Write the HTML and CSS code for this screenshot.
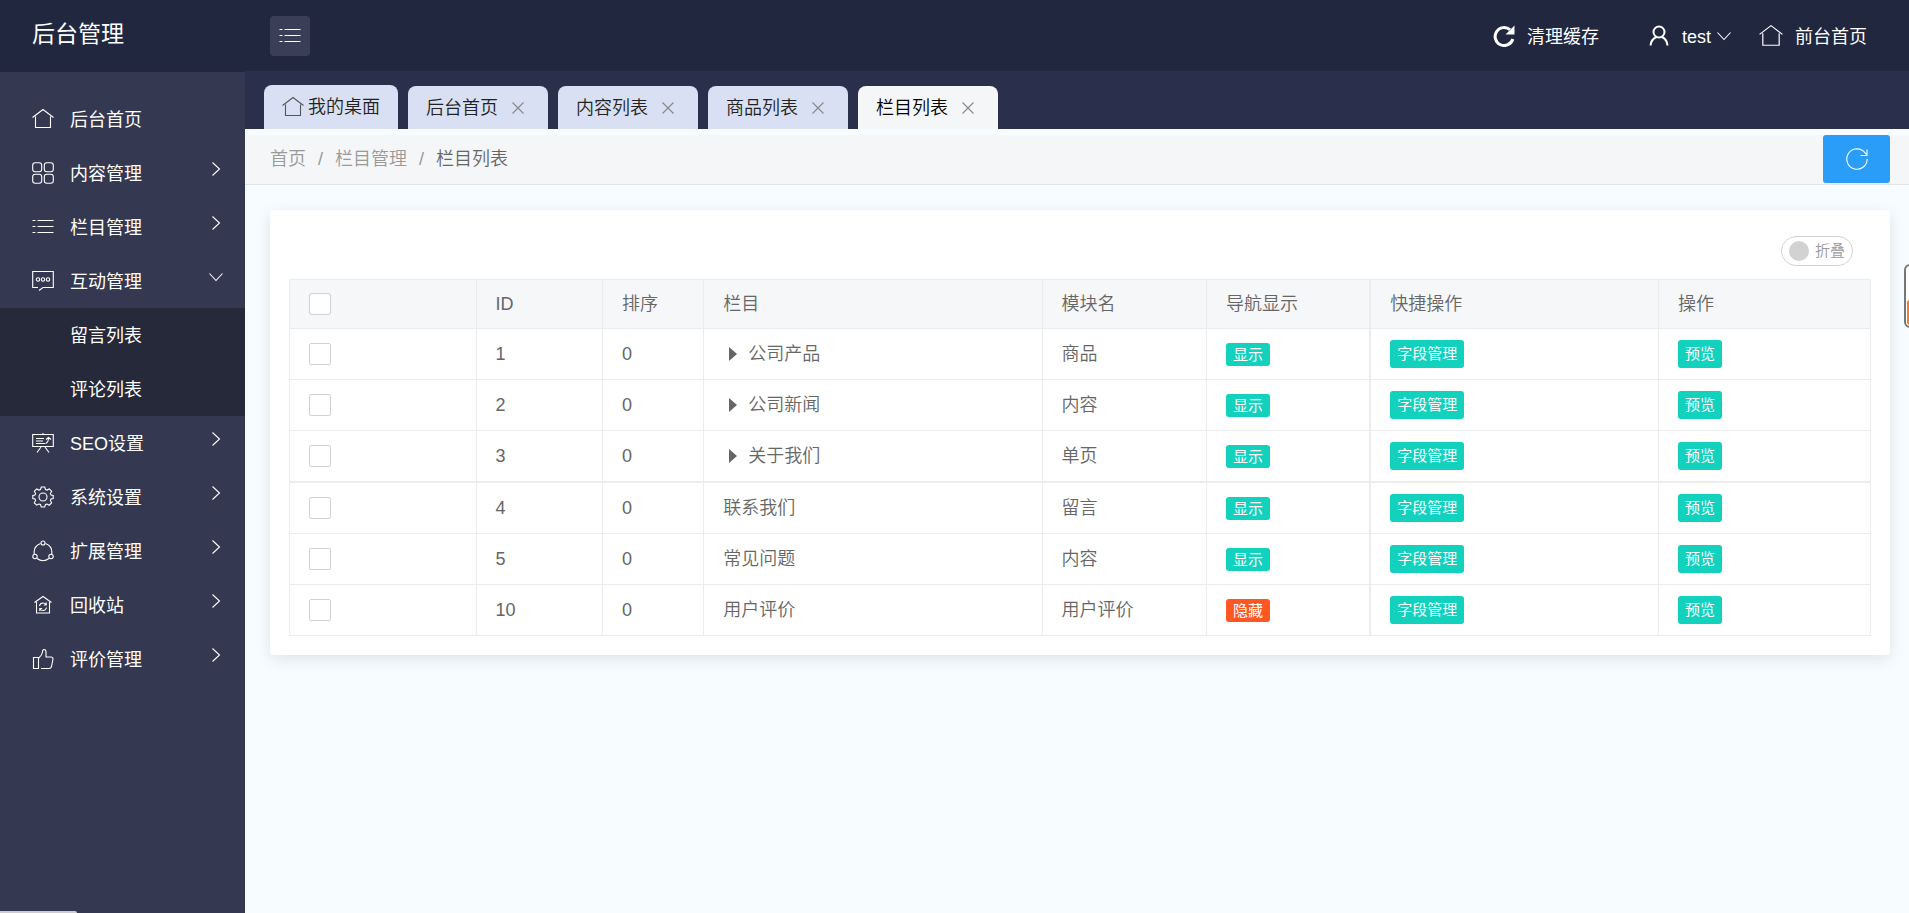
FILE: index.html
```html
<!DOCTYPE html>
<html lang="zh-CN">
<head>
<meta charset="utf-8">
<meta name="viewport" content="width=device-width, initial-scale=1">
<title>后台管理</title>
<link rel="stylesheet" href="styles.css">
</head>
<body>
<svg class="sprite" aria-hidden="true">
  <symbol id="i-home" viewBox="0 0 22 22"><path d="M.5 9.500 11 1.500 21.500 9.500M3.500 8.500V19.500H18.500V8.500"/></symbol>
  <symbol id="i-grid" viewBox="0 0 22 22"><rect x=".7" y=".7" width="9" height="9" rx="2.500"/><rect x="12.300" y=".7" width="9" height="9" rx="2.500"/><rect x=".7" y="12.300" width="9" height="9" rx="2.500"/><rect x="12.300" y="12.300" width="9" height="9" rx="2.500"/></symbol>
  <symbol id="i-list" viewBox="0 0 22 22"><path d="M.5 4.500H3.500M5.500 4.500H21.500M.5 10.500H3.500M5.500 10.500H21.500M.5 16.500H3.500M5.500 16.500H21.500"/></symbol>
  <symbol id="i-chat" viewBox="0 0 22 22"><path d="M6 17.500H.7V1.500H21.300V17.500H11L7 20.500"/><circle cx="6" cy="9.500" r="1.700"/><circle cx="11" cy="9.500" r="1.700"/><circle cx="16" cy="9.500" r="1.700"/></symbol>
  <symbol id="i-board" viewBox="0 0 22 22"><path d="M.7 2.500H21.300V14.500H.7ZM11 1V2.500M4 6.500H12M4 9H11M4 11.500H13M13.500 11.500Q16.500 10.500 16.500 5.500M14 7.500 16.500 5.500 19 7.500M9 15 5 20.500M13 15 17 20.500"/></symbol>
  <symbol id="i-gear" viewBox="0 0 22 22"><path d="M8.500 3.500 9.300 1H12.700L13.500 3.500 15 4.100 17.300 2.900 19.700 5.300 18.400 7.600 19 9 21.200 9.500V12.500L19 13 18.400 14.500 19.600 16.800 17.200 19.200 15 18 13.500 18.500 12.700 21H9.300L8.500 18.500 7 18 4.700 19.200 2.300 16.800 3.600 14.500 3 13 .8 12.500V9.500L3 9 3.600 7.600 2.300 5.300 4.700 2.900 7 4.100Z"/><circle cx="11" cy="11" r="4"/></symbol>
  <symbol id="i-share" viewBox="0 0 22 22"><circle cx="11" cy="3" r="2"/><circle cx="3" cy="16.500" r="2.200"/><circle cx="19" cy="16.500" r="2.200"/><path d="M8.500 3.500C3.500 5 1.500 9.500 2.300 14M13.500 3.500C18.500 5 20.500 9.500 19.700 14M5 18.500Q11 23 17 18.500"/></symbol>
  <symbol id="i-recycle" viewBox="0 0 22 22"><path d="M2.500 8.500 11 2.500 19.500 8.500M4.500 8V19H17.500V8M7.500 12Q8 9 11 9 13 9 14 10.500M14.200 8.500V11H11.800M14.500 13.500Q14 16.500 11 16.500 9 16.500 8 15M7.800 17V14.500H10.200"/></symbol>
  <symbol id="i-thumb" viewBox="0 0 22 22"><path d="M1.500 9.500H6.500V20.500H1.500ZM9 20.500H17Q19 20.500 19.500 18.500L21 11Q21 9 19 9H14V4Q14 1.500 12 1.500 10.500 1.500 10.500 4 10 7.500 6.800 10"/></symbol>
  <symbol id="i-right" viewBox="0 0 16 16"><path d="M4.500 1.500 11.500 8 4.500 14.500"/></symbol>
  <symbol id="i-down" viewBox="0 0 16 16"><path d="M1.500 4.500 8 11.500 14.500 4.500"/></symbol>
  <symbol id="i-close" viewBox="0 0 16 16"><path d="M2.500 2.500 13.500 13.500M13.500 2.500 2.500 13.500"/></symbol>
  <symbol id="i-user" viewBox="0 0 22 22"><circle cx="11" cy="7" r="5.500"/><path d="M2.500 20.500Q3 14.500 8.500 12M14 12Q19 14.500 19.500 20.500"/></symbol>
  <symbol id="i-reload" viewBox="0 0 22 22"><path d="M21.200 11A10.200 10.200 0 1 1 17.500 3.200L20.500 6.500M21 1.500V7.500H14.500"/></symbol>
  <symbol id="i-reload-bold" viewBox="0 0 22 22"><path d="M19.800 14A9 9 0 1 1 17 4.700" stroke-width="3"/><path d="M21.500 .5V9.500H12.500Z" fill="currentColor" stroke="none"/></symbol>
</svg>

<div class="app">
  <aside class="sidebar">
    <h1 class="brand">后台管理</h1>
    <nav class="menu" aria-label="主菜单">
      <a class="menu-item" href="#"><svg class="icon"><use href="#i-home"/></svg><span>后台首页</span></a>
      <a class="menu-item" href="#"><svg class="icon"><use href="#i-grid"/></svg><span>内容管理</span><svg class="arrow"><use href="#i-right"/></svg></a>
      <a class="menu-item" href="#"><svg class="icon"><use href="#i-list"/></svg><span>栏目管理</span><svg class="arrow"><use href="#i-right"/></svg></a>
      <a class="menu-item" href="#"><svg class="icon"><use href="#i-chat"/></svg><span>互动管理</span><svg class="arrow"><use href="#i-down"/></svg></a>
      <div class="submenu">
        <a class="menu-item" href="#"><span>留言列表</span></a>
        <a class="menu-item" href="#"><span>评论列表</span></a>
      </div>
      <a class="menu-item" href="#"><svg class="icon"><use href="#i-board"/></svg><span>SEO设置</span><svg class="arrow"><use href="#i-right"/></svg></a>
      <a class="menu-item" href="#"><svg class="icon"><use href="#i-gear"/></svg><span>系统设置</span><svg class="arrow"><use href="#i-right"/></svg></a>
      <a class="menu-item" href="#"><svg class="icon"><use href="#i-share"/></svg><span>扩展管理</span><svg class="arrow"><use href="#i-right"/></svg></a>
      <a class="menu-item" href="#"><svg class="icon"><use href="#i-recycle"/></svg><span>回收站</span><svg class="arrow"><use href="#i-right"/></svg></a>
      <a class="menu-item" href="#"><svg class="icon"><use href="#i-thumb"/></svg><span>评价管理</span><svg class="arrow"><use href="#i-right"/></svg></a>
    </nav>
  </aside>

  <div class="main">
    <header class="topbar">
      <button class="toggle" type="button" aria-label="收起菜单"><svg class="icon"><use href="#i-list"/></svg></button>
      <div class="actions">
        <a class="action action-cache" href="#"><svg class="icon"><use href="#i-reload-bold"/></svg><span>清理缓存</span></a>
        <a class="action action-user" href="#"><svg class="icon icon-bold"><use href="#i-user"/></svg><span>test</span><svg class="caret"><use href="#i-down"/></svg></a>
        <a class="action action-home" href="#"><svg class="icon icon-large"><use href="#i-home"/></svg><span>前台首页</span></a>
      </div>
    </header>

    <div class="tabs">
      <div class="tab tab-first"><a class="tab-link tab-home" href="#"><svg class="icon"><use href="#i-home"/></svg>我的桌面</a></div>
      <div class="tab"><a class="tab-link" href="#">后台首页</a><button class="close" type="button" aria-label="关闭后台首页"><svg><use href="#i-close"/></svg></button></div>
      <div class="tab"><a class="tab-link" href="#">内容列表</a><button class="close" type="button" aria-label="关闭内容列表"><svg><use href="#i-close"/></svg></button></div>
      <div class="tab"><a class="tab-link" href="#">商品列表</a><button class="close" type="button" aria-label="关闭商品列表"><svg><use href="#i-close"/></svg></button></div>
      <div class="tab tab-active"><a class="tab-link" href="#">栏目列表</a><button class="close" type="button" aria-label="关闭栏目列表"><svg><use href="#i-close"/></svg></button></div>
    </div>

    <div class="crumbs">
      <nav class="trail" aria-label="面包屑"><a href="#">首页</a><span>/</span><a href="#">栏目管理</a><span>/</span><a class="current" href="#">栏目列表</a></nav>
      <button class="refresh" type="button" aria-label="刷新"><svg class="icon"><use href="#i-reload"/></svg></button>
    </div>

    <main class="card">
      <div class="tools"><label class="switch"><input type="checkbox"><span>折叠</span></label></div>
      <table class="grid">
        <colgroup><col class="c-check"><col class="c-id"><col class="c-sort"><col class="c-name"><col class="c-module"><col class="c-show"><col class="c-quick"><col></colgroup>
        <thead>
          <tr><th><input class="check" type="checkbox" aria-label="全选"></th><th>ID</th><th>排序</th><th>栏目</th><th>模块名</th><th class="edge">导航显示</th><th>快捷操作</th><th>操作</th></tr>
        </thead>
        <tbody>
          <tr><td><input class="check" type="checkbox" aria-label="选择 1"></td><td>1</td><td>0</td><td><button class="node" type="button">公司产品</button></td><td>商品</td><td class="edge"><span class="badge">显示</span></td><td><a class="btn" href="#">字段管理</a></td><td><a class="btn" href="#">预览</a></td></tr>
          <tr><td><input class="check" type="checkbox" aria-label="选择 2"></td><td>2</td><td>0</td><td><button class="node" type="button">公司新闻</button></td><td>内容</td><td class="edge"><span class="badge">显示</span></td><td><a class="btn" href="#">字段管理</a></td><td><a class="btn" href="#">预览</a></td></tr>
          <tr class="divide"><td><input class="check" type="checkbox" aria-label="选择 3"></td><td>3</td><td>0</td><td><button class="node" type="button">关于我们</button></td><td>单页</td><td class="edge"><span class="badge">显示</span></td><td><a class="btn" href="#">字段管理</a></td><td><a class="btn" href="#">预览</a></td></tr>
          <tr><td><input class="check" type="checkbox" aria-label="选择 4"></td><td>4</td><td>0</td><td>联系我们</td><td>留言</td><td class="edge"><span class="badge">显示</span></td><td><a class="btn" href="#">字段管理</a></td><td><a class="btn" href="#">预览</a></td></tr>
          <tr><td><input class="check" type="checkbox" aria-label="选择 5"></td><td>5</td><td>0</td><td>常见问题</td><td>内容</td><td class="edge"><span class="badge">显示</span></td><td><a class="btn" href="#">字段管理</a></td><td><a class="btn" href="#">预览</a></td></tr>
          <tr><td><input class="check" type="checkbox" aria-label="选择 10"></td><td>10</td><td>0</td><td>用户评价</td><td>用户评价</td><td class="edge"><span class="badge badge-off">隐藏</span></td><td><a class="btn" href="#">字段管理</a></td><td><a class="btn" href="#">预览</a></td></tr>
        </tbody>
      </table>
    </main>
  </div>
</div>
<div class="side-widget" aria-hidden="true"><div class="side-mark"></div></div>
<div class="status-bubble" aria-hidden="true"></div>
</body>
</html>
```

FILE: styles.css
```css
* { box-sizing: border-box; }

body {
  margin: 0;
  overflow: hidden;
  background: #f6fcff;
  color: #666;
  font: 350 18px/24px "Liberation Sans", "Noto Sans CJK SC", sans-serif;
}

a { color: inherit; text-decoration: none; }
button { padding: 0; border: 0; background: none; color: inherit; font: inherit; cursor: pointer; }
svg { flex: none; fill: none; stroke: currentColor; stroke-width: 1.1; }

.sprite { position: absolute; width: 0; height: 0; }
.icon { width: 22px; height: 22px; }
.icon-bold { stroke-width: 2; }
.icon-large { width: 24px; height: 24px; }

.app { display: grid; grid-template-columns: 245px minmax(0, 1fr); min-height: 100vh; }

/* Sidebar */
.sidebar { background: #343850; color: #fff; font-weight: 400; }
.brand { height: 72px; margin: 0; padding-left: 32px; background: #20273f; font-size: 23px; font-weight: 400; line-height: 68px; }
.menu { padding-top: 20px; }
.menu-item { display: flex; align-items: center; height: 54px; padding: 0 21px 0 32px; }
.menu-item .icon { margin-right: 16px; }
.menu-item span, .action span { padding-top: 2px; }
.arrow { width: 16px; height: 16px; margin: 0 0 8px auto; }
.submenu { background: #252939; }
.submenu .menu-item { padding-left: 70px; }

/* Header */
.main { min-width: 0; }
.topbar { display: flex; align-items: center; justify-content: space-between; height: 71px; padding: 0 42px 0 25px; background: #20273f; color: #fff; font-weight: 400; }
.toggle { display: grid; place-items: center; width: 40px; height: 40px; border-radius: 4px; background: #3a3f57; }
.actions { display: flex; }
.action { display: flex; align-items: center; }
.action .icon { margin-right: 12px; }
.action-user { margin-left: 49px; }
.action-home { margin-left: 27px; }
.caret { width: 16px; height: 16px; margin-left: 5px; }

/* Tabs */
.tabs { display: flex; align-items: flex-end; gap: 10px; height: 58px; padding-left: 19px; background: #2a304c; color: #222; }
.tab { display: flex; align-items: center; height: 43px; border-radius: 8px 8px 0 0; background: #d9e0f3; }
.tab-first { height: 44px; }
.tab-link { padding: 0 12px 0 18px; }
.tab-home { display: flex; align-items: center; gap: 4px; padding-right: 18px; }
.tab-home .icon { color: #555; }
.tab-active { background: #f5f6f8; color: #000; }
.close { width: 16px; height: 16px; margin-right: 22px; color: #888; }
.close svg { display: block; width: 16px; height: 16px; }

/* Breadcrumb */
.crumbs { display: flex; align-items: center; justify-content: space-between; height: 50px; margin-top: 6px; padding: 0 19px 1px 25px; border-bottom: 1px solid #e2e4e6; background: #f5f6f8; }
.trail { display: flex; gap: 12px; color: #999; }
.trail .current { color: #666; }
.refresh { display: grid; place-items: center; width: 67px; height: 48px; border-radius: 3px; background: #2a9df9; color: #fff; }

/* Card and table */
.card { margin: 25px 19px 0 25px; padding: 26px 19px 19px; border-radius: 3px; background: #fff; box-shadow: 0 4px 16px rgba(0, 0, 0, 0.1); }
.tools { display: flex; justify-content: flex-end; padding: 0 18px 13px 0; }
.switch { display: flex; align-items: center; gap: 6px; height: 30px; padding: 0 7px; border: 1px solid #d2d2d2; border-radius: 15px; color: #999; font-size: 15px; }
.switch input { appearance: none; width: 20px; height: 20px; margin: 0; border-radius: 50%; background: #d2d2d2; }

.grid { width: 100%; table-layout: fixed; border: solid #ececec; border-width: 1px 0 0 1px; border-collapse: separate; border-spacing: 0; text-align: left; }
.grid th, .grid td { height: 51px; padding: 0 19px; border: solid #ececec; border-width: 0 1px 1px 0; font-weight: 350; vertical-align: middle; }
.grid th { height: 49px; background: #f6f7f9; }
.grid .edge { border-right-width: 2px; }
.grid .divide td { height: 52px; border-bottom-width: 2px; }
.c-check { width: 11.8%; }
.c-id { width: 8%; }
.c-sort { width: 6.4%; }
.c-name { width: 21.4%; }
.c-module { width: 10.4%; }
.c-show { width: 10.4%; }
.c-quick { width: 18.2%; }

.check { display: block; appearance: none; width: 22px; height: 22px; margin: 0; border: 1px solid #d2d2d2; border-radius: 2px; background: #fff; }
.node { display: flex; align-items: center; gap: 11px; padding-left: 6px; }
.node::before { content: ""; border: solid transparent; border-width: 7px 0 7px 8px; border-left-color: #666; }
.badge, .btn { display: block; width: fit-content; padding: 0 7px; border-radius: 3px; background: #12d1bd; color: #fff; font-size: 15px; font-weight: 400; }
.badge { line-height: 23px; }
.badge-off { background: #ff5722; }
.btn { line-height: 28px; }

/* Overlays at the window edges */
.side-widget { position: fixed; top: 264px; right: -40px; width: 45px; height: 64px; padding: 34px 0 0 1px; border: 2px solid #777; border-radius: 6px; background: #fff; }
.side-mark { height: 25px; border-radius: 3px; background: #f97b22; }
.status-bubble { position: fixed; bottom: 0; left: 0; width: 77px; height: 2px; border-radius: 0 3px 0 0; background: #cfcbd0; }
```
